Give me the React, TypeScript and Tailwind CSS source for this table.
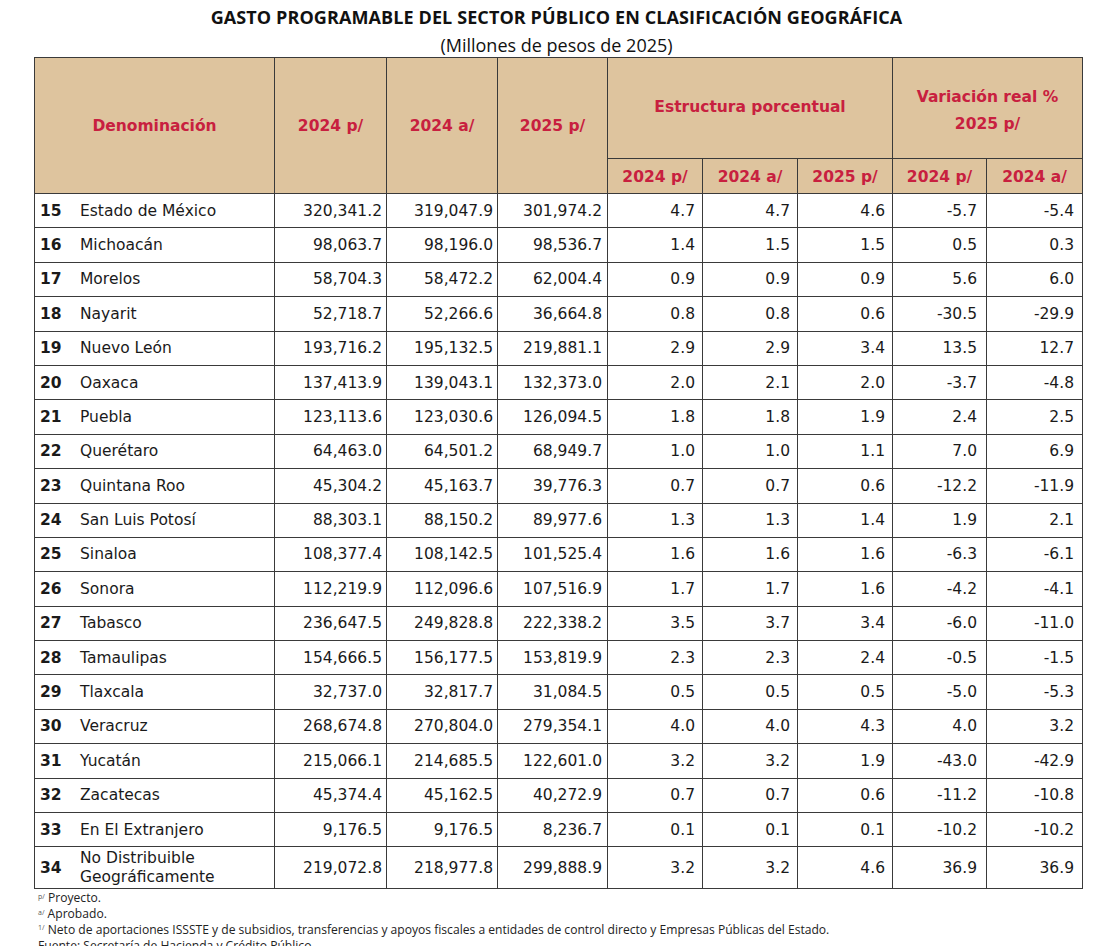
import React from "react"

type Row = [string, string, string, string, string, string, string, string, string, string]

const rows: Row[] = [
  ["15", "Estado de México", "320,341.2", "319,047.9", "301,974.2", "4.7", "4.7", "4.6", "-5.7", "-5.4"],
  ["16", "Michoacán", "98,063.7", "98,196.0", "98,536.7", "1.4", "1.5", "1.5", "0.5", "0.3"],
  ["17", "Morelos", "58,704.3", "58,472.2", "62,004.4", "0.9", "0.9", "0.9", "5.6", "6.0"],
  ["18", "Nayarit", "52,718.7", "52,266.6", "36,664.8", "0.8", "0.8", "0.6", "-30.5", "-29.9"],
  ["19", "Nuevo León", "193,716.2", "195,132.5", "219,881.1", "2.9", "2.9", "3.4", "13.5", "12.7"],
  ["20", "Oaxaca", "137,413.9", "139,043.1", "132,373.0", "2.0", "2.1", "2.0", "-3.7", "-4.8"],
  ["21", "Puebla", "123,113.6", "123,030.6", "126,094.5", "1.8", "1.8", "1.9", "2.4", "2.5"],
  ["22", "Querétaro", "64,463.0", "64,501.2", "68,949.7", "1.0", "1.0", "1.1", "7.0", "6.9"],
  ["23", "Quintana Roo", "45,304.2", "45,163.7", "39,776.3", "0.7", "0.7", "0.6", "-12.2", "-11.9"],
  ["24", "San Luis Potosí", "88,303.1", "88,150.2", "89,977.6", "1.3", "1.3", "1.4", "1.9", "2.1"],
  ["25", "Sinaloa", "108,377.4", "108,142.5", "101,525.4", "1.6", "1.6", "1.6", "-6.3", "-6.1"],
  ["26", "Sonora", "112,219.9", "112,096.6", "107,516.9", "1.7", "1.7", "1.6", "-4.2", "-4.1"],
  ["27", "Tabasco", "236,647.5", "249,828.8", "222,338.2", "3.5", "3.7", "3.4", "-6.0", "-11.0"],
  ["28", "Tamaulipas", "154,666.5", "156,177.5", "153,819.9", "2.3", "2.3", "2.4", "-0.5", "-1.5"],
  ["29", "Tlaxcala", "32,737.0", "32,817.7", "31,084.5", "0.5", "0.5", "0.5", "-5.0", "-5.3"],
  ["30", "Veracruz", "268,674.8", "270,804.0", "279,354.1", "4.0", "4.0", "4.3", "4.0", "3.2"],
  ["31", "Yucatán", "215,066.1", "214,685.5", "122,601.0", "3.2", "3.2", "1.9", "-43.0", "-42.9"],
  ["32", "Zacatecas", "45,374.4", "45,162.5", "40,272.9", "0.7", "0.7", "0.6", "-11.2", "-10.8"],
  ["33", "En El Extranjero", "9,176.5", "9,176.5", "8,236.7", "0.1", "0.1", "0.1", "-10.2", "-10.2"],
]

const last: Row = ["34", "No Distribuible Geográficamente", "219,072.8", "218,977.8", "299,888.9", "3.2", "3.2", "4.6", "36.9", "36.9"]

// header cells: tan fill, crimson labels
const th = "border border-[#3a3a3a] bg-[#dec49e] text-[#c8203f] font-bold text-[15.5px] text-center align-middle"
const td = "border border-[#3a3a3a] text-right text-[15.5px] text-[#1a1a1a]"

function BodyRow({ r, tall }: { r: Row; tall?: boolean }) {
  return (
    <tr className={tall ? "h-[42px]" : "h-[34.4px]"}>
      <td className="border border-[#3a3a3a] text-[15.5px] text-[#1a1a1a]">
        <div className="flex items-center pt-[1px]">
          <span className="w-[45px] pl-[5px] font-bold">{r[0]}</span>
          <span className={tall ? "leading-[19px]" : ""}>
            {tall ? (
              <>
                No Distribuible
                <br />
                Geográficamente
              </>
            ) : (
              r[1]
            )}
          </span>
        </div>
      </td>
      <td className={`${td} pr-[4px] pt-[1px]`}>{r[2]}</td>
      <td className={`${td} pr-[4px] pt-[1px]`}>{r[3]}</td>
      <td className={`${td} pr-[5px] pt-[1px]`}>{r[4]}</td>
      <td className={`${td} pr-[7px] pt-[1px]`}>{r[5]}</td>
      <td className={`${td} pr-[7px] pt-[1px]`}>{r[6]}</td>
      <td className={`${td} pr-[7px] pt-[1px]`}>{r[7]}</td>
      <td className={`${td} pr-[9px] pt-[1px]`}>{r[8]}</td>
      <td className={`${td} pr-[8px] pt-[1px]`}>{r[9]}</td>
    </tr>
  )
}

export default function App() {
  return (
    <div className="w-[1113px] h-[946px] overflow-hidden bg-white" style={{ fontFamily: "'DejaVu Sans', sans-serif" }}>
      <div className="pt-[6px] text-center text-[#111]">
        <h1 className="text-[18px] font-bold leading-[23px] tracking-[0.1px]" style={{ fontFamily: "'Open Sans', sans-serif" }}>
          GASTO PROGRAMABLE DEL SECTOR PÚBLICO EN CLASIFICACIÓN GEOGRÁFICA
        </h1>
        <p className="text-[18px] leading-[22px] mt-[5px]" style={{ fontFamily: "'Open Sans', sans-serif" }}>
          (Millones de pesos de 2025)
        </p>
      </div>

      <div className="ml-[34px] w-[1048px] mt-[1px]">
        <table className="w-full table-fixed border-collapse">
          <colgroup>
            <col className="w-[240px]" />
            <col className="w-[112px]" />
            <col className="w-[111px]" />
            <col className="w-[110px]" />
            <col className="w-[95px]" />
            <col className="w-[95px]" />
            <col className="w-[95px]" />
            <col className="w-[94px]" />
            <col className="w-[96px]" />
          </colgroup>
          <thead>
            <tr className="h-[101px]">
              <th rowSpan={2} className={`${th} pt-[2px]`}>Denominación</th>
              <th rowSpan={2} className={`${th} pt-[2px]`}>2024 p/</th>
              <th rowSpan={2} className={`${th} pt-[2px]`}>2024 a/</th>
              <th rowSpan={2} className={`${th} pt-[2px]`}>2025 p/</th>
              <th colSpan={3} className={th}>Estructura porcentual</th>
              <th colSpan={2} className={`${th} leading-[27px] pt-[6px]`}>
                Variación real %
                <br />
                2025 p/
              </th>
            </tr>
            <tr className="h-[35px]">
              <th className={`${th} pt-[3px]`}>2024 p/</th>
              <th className={`${th} pt-[3px]`}>2024 a/</th>
              <th className={`${th} pt-[3px]`}>2025 p/</th>
              <th className={`${th} pt-[3px]`}>2024 p/</th>
              <th className={`${th} pt-[3px]`}>2024 a/</th>
            </tr>
          </thead>
          <tbody>
            {rows.map((r) => (
              <BodyRow key={r[0]} r={r} />
            ))}
            <BodyRow r={last} tall />
          </tbody>
        </table>

        <div className="text-[12.1px] leading-[15.7px] text-[#222] pl-[4px] pt-[1px]" style={{ fontFamily: "'Open Sans', sans-serif" }}>
          <p>
            <sup className="text-[7px] text-[#555]">p/</sup> Proyecto.
          </p>
          <p>
            <sup className="text-[7px] text-[#555]">a/</sup> Aprobado.
          </p>
          <p>
            <sup className="text-[7px] text-[#555]">1/</sup> Neto de aportaciones ISSSTE y de subsidios, transferencias y apoyos fiscales a entidades de control directo y Empresas Públicas del Estado.
          </p>
          <p>Fuente: Secretaría de Hacienda y Crédito Público.</p>
        </div>
      </div>
    </div>
  )
}
